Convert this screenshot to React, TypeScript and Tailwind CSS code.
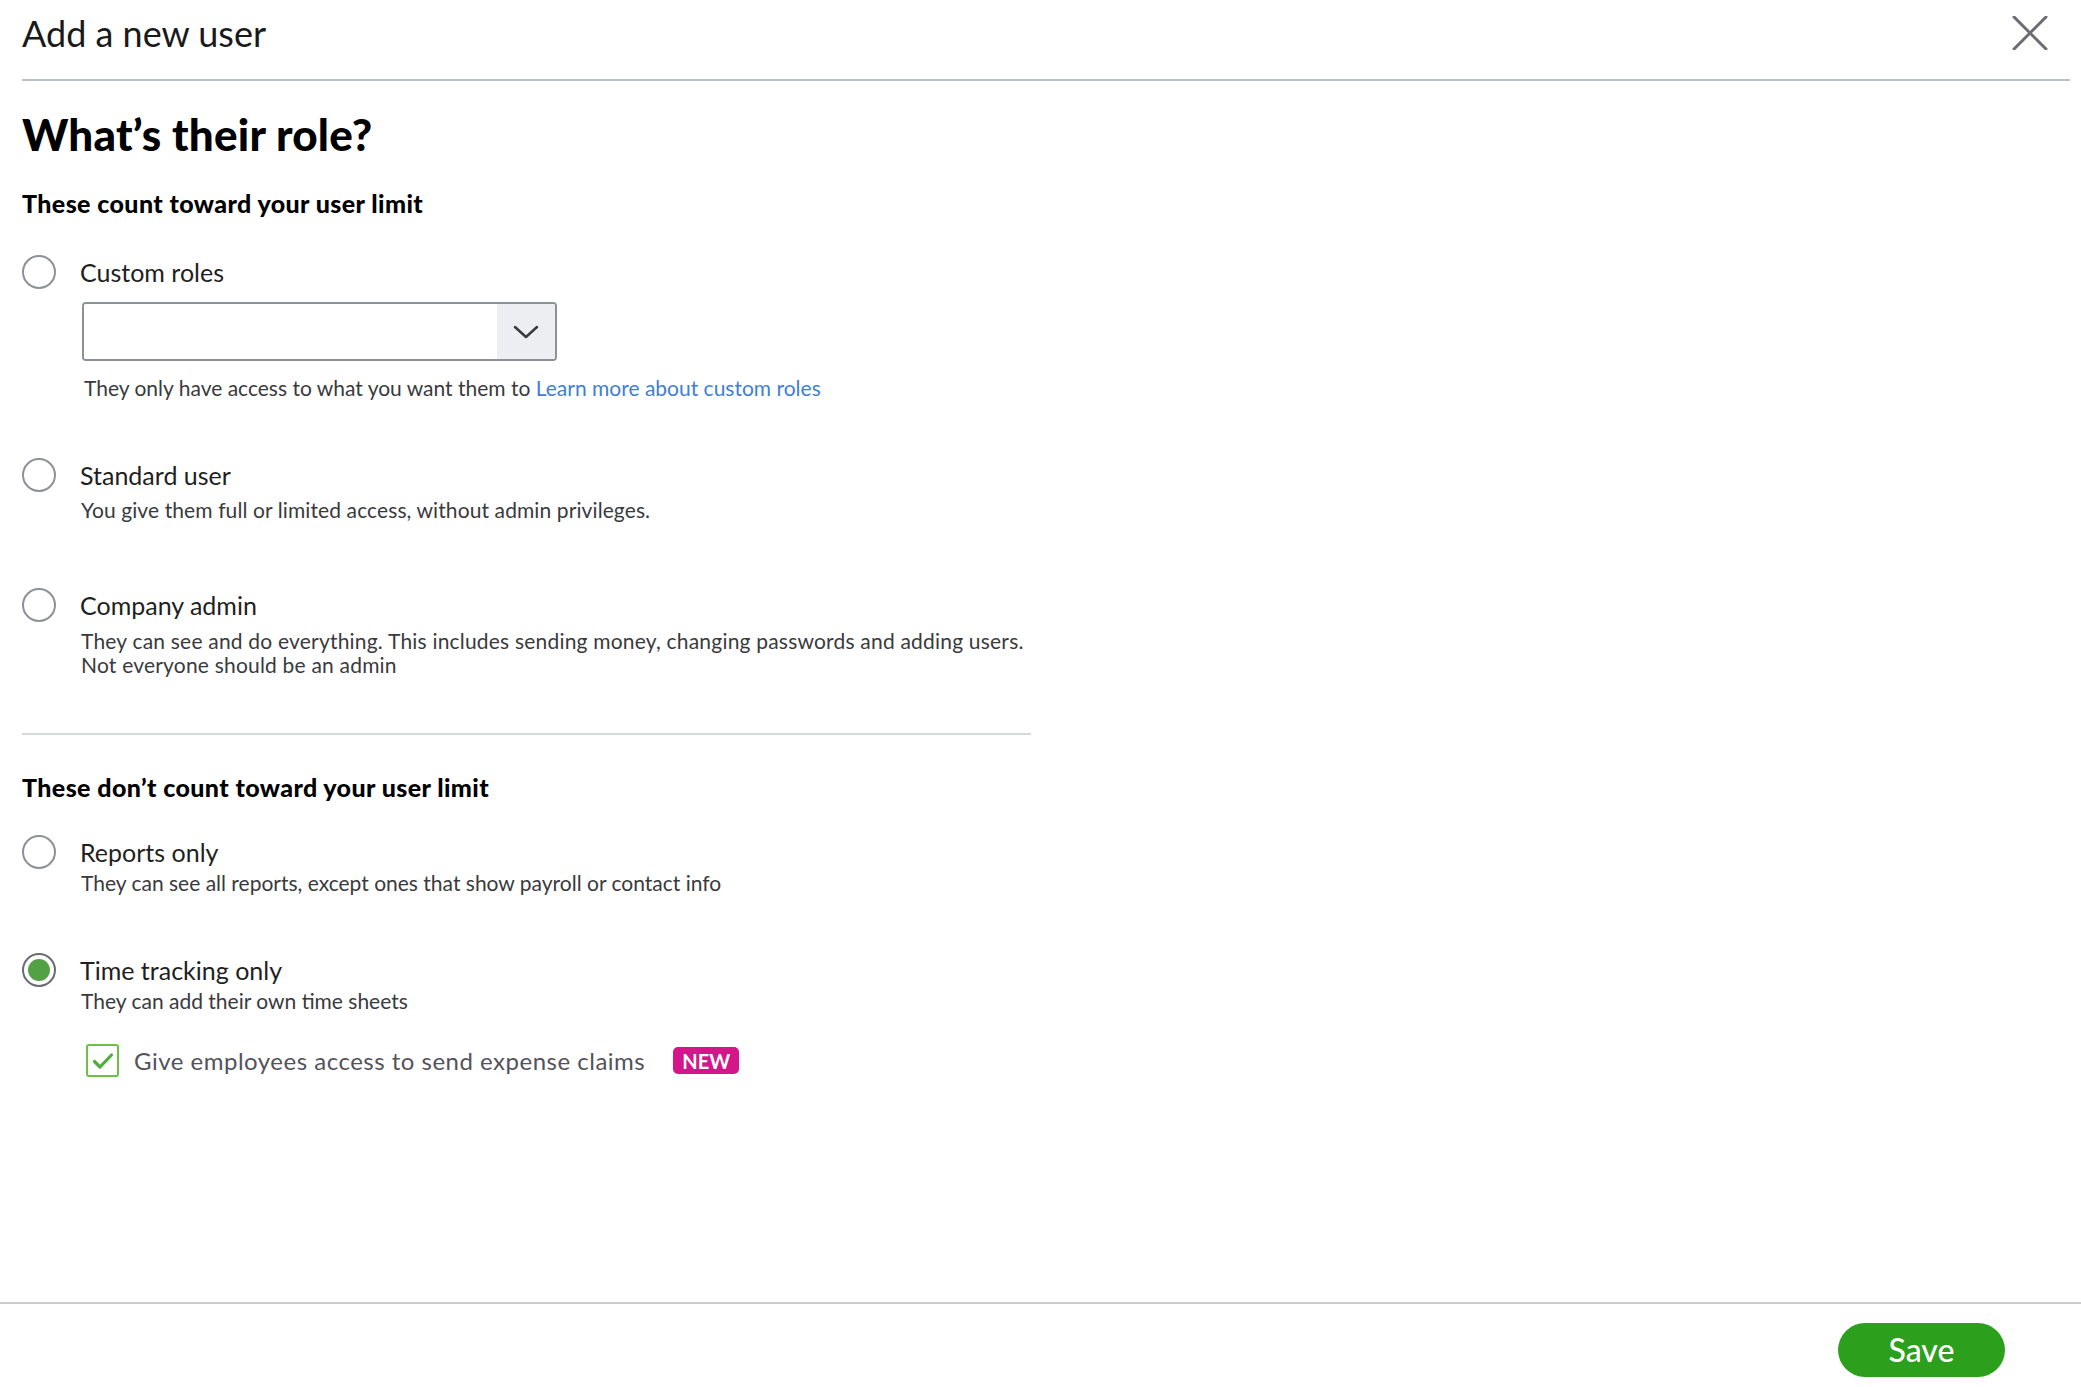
import { useState } from 'react';

interface RoleOption {
    id: string;
    label: string;
    lines: string[];
}

const Radio = ({ checked }: { checked: boolean }) => (
    <span
        className={`flex h-[34px] w-[34px] shrink-0 items-center justify-center rounded-full border-2 bg-white ${
            checked ? 'border-[#6b6c72]' : 'border-[#8d9096]'
        }`}
    >
        {checked && <span className="h-[22px] w-[22px] rounded-full bg-[#53a145]" />}
    </span>
);

const RoleRow = ({
    option,
    selected,
    onSelect,
}: {
    option: RoleOption;
    selected: boolean;
    onSelect: (id: string) => void;
}) => (
    <button
        type="button"
        onClick={() => onSelect(option.id)}
        className="flex h-[34px] items-center gap-[24px] text-left"
    >
        <Radio checked={selected} />
        <span className="text-[25px] leading-[34px] text-[#1f1f22]">{option.label}</span>
    </button>
);

const App: React.FC = () => {
    const [role, setRole] = useState('time');
    const [expenses, setExpenses] = useState(true);

    const custom: RoleOption = { id: 'custom', label: 'Custom roles', lines: [] };
    const standard: RoleOption = {
        id: 'standard',
        label: 'Standard user',
        lines: ['You give them full or limited access, without admin privileges.'],
    };
    const admin: RoleOption = {
        id: 'admin',
        label: 'Company admin',
        lines: [
            'They can see and do everything. This includes sending money, changing passwords and adding users.',
            'Not everyone should be an admin',
        ],
    };
    const reports: RoleOption = {
        id: 'reports',
        label: 'Reports only',
        lines: ['They can see all reports, except ones that show payroll or contact info'],
    };
    const time: RoleOption = {
        id: 'time',
        label: 'Time tracking only',
        lines: ['They can add their own time sheets'],
    };

    return (
        <div className="flex h-[1387px] w-full flex-col bg-white font-['Lato',sans-serif] text-[#393a3d]">
            {/* header */}
            <div className="ml-[22px] mr-[11px] flex h-[81px] shrink-0 items-start justify-between border-b-2 border-[#babec5] pt-[14px] pr-[22px]">
                <h1 className="text-[36px] leading-[38px] font-normal text-[#1a1a1a]">Add a new user</h1>
                <button type="button" className="mt-[2px] text-[#6b6c72]">
                    <svg width="36" height="34" viewBox="0 0 36 34" fill="none" stroke="currentColor" strokeWidth="3" strokeLinecap="round">
                        <path d="M2 1 L34 33 M34 1 L2 33" />
                    </svg>
                </button>
            </div>

            {/* body */}
            <div className="flex flex-1 flex-col pl-[22px]">
                <h2 className="mt-[27px] text-[44px] leading-[52px] tracking-[0.2px] font-black text-black">What’s their role?</h2>

                <h3 className="mt-[28px] text-[25px] leading-[30px] tracking-[0.4px] font-black text-black">These count toward your user limit</h3>

                <div className="mt-[37px]">
                    <RoleRow option={custom} selected={role === 'custom'} onSelect={setRole} />
                </div>
                <div className="mt-[13px] ml-[60px] flex h-[59px] w-[475px] overflow-hidden rounded-[4px] border-2 border-[#8d9096]">
                    <div className="flex-1 bg-white" />
                    <div className="flex w-[58px] items-center justify-center bg-[#eceef1] text-[#393a3d]">
                        <svg width="26" height="14" viewBox="0 0 26 14" fill="none" stroke="currentColor" strokeWidth="2.5" strokeLinecap="round" strokeLinejoin="round">
                            <path d="M2 2 L13 12 L24 2" />
                        </svg>
                    </div>
                </div>
                <p className="mt-[14px] ml-[62px] text-[21px] leading-[26px]">
                    They only have access to what you want them to{' '}
                    <a href="#" className="text-[#3e7fd6]">Learn more about custom roles</a>
                </p>

                <div className="mt-[57px]">
                    <RoleRow option={standard} selected={role === 'standard'} onSelect={setRole} />
                </div>
                <p className="mt-[5px] ml-[59px] text-[21px] leading-[26px] tracking-[0.1px]">{standard.lines[0]}</p>

                <div className="mt-[65px]">
                    <RoleRow option={admin} selected={role === 'admin'} onSelect={setRole} />
                </div>
                <div className="mt-[7px] ml-[59px] text-[21px] leading-[24px] tracking-[0.2px]">
                    {admin.lines.map((line) => (
                        <p key={line}>{line}</p>
                    ))}
                </div>

                <div className="mt-[56px] h-[2px] w-[1009px] bg-[#d4d7dc]" />

                <h3 className="mt-[37px] text-[25px] leading-[30px] tracking-[0.4px] font-black text-black">These don’t count toward your user limit</h3>

                <div className="mt-[33px]">
                    <RoleRow option={reports} selected={role === 'reports'} onSelect={setRole} />
                </div>
                <p className="mt-[1px] ml-[59px] text-[21px] leading-[26px]">{reports.lines[0]}</p>

                <div className="mt-[57px]">
                    <RoleRow option={time} selected={role === 'time'} onSelect={setRole} />
                </div>
                <p className="mt-[1px] ml-[59px] text-[21px] leading-[26px]">{time.lines[0]}</p>

                <div className="mt-[30px] ml-[64px] flex items-center">
                    <button
                        type="button"
                        onClick={() => setExpenses(!expenses)}
                        className="flex h-[33px] w-[33px] items-center justify-center rounded-[3px] border-2 border-[#6cc04a] bg-white"
                    >
                        {expenses && (
                            <svg width="22" height="18" viewBox="0 0 22 18" fill="none" stroke="#4fae3b" strokeWidth="3.2" strokeLinecap="round" strokeLinejoin="round">
                                <path d="M2.5 9.5 L8 15 L19.5 3" />
                            </svg>
                        )}
                    </button>
                    <span className="ml-[15px] text-[24px] leading-[30px] tracking-[0.5px] text-[#54525c]">
                        Give employees access to send expense claims
                    </span>
                    <span className="ml-[28px] flex h-[27px] items-center rounded-[5px] bg-[#d4168a] px-[9px] text-[20px] leading-none font-bold text-white">
                        NEW
                    </span>
                </div>
            </div>

            {/* footer */}
            <div className="flex h-[85px] shrink-0 items-start justify-end border-t-2 border-[#c9ccd1] pt-[19px] pr-[76px]">
                <button
                    type="button"
                    className="flex h-[54px] w-[167px] items-center justify-center rounded-full bg-[#2ca01c] text-[32px] leading-none font-medium text-white"
                >
                    Save
                </button>
            </div>
        </div>
    );
};

export default App;
